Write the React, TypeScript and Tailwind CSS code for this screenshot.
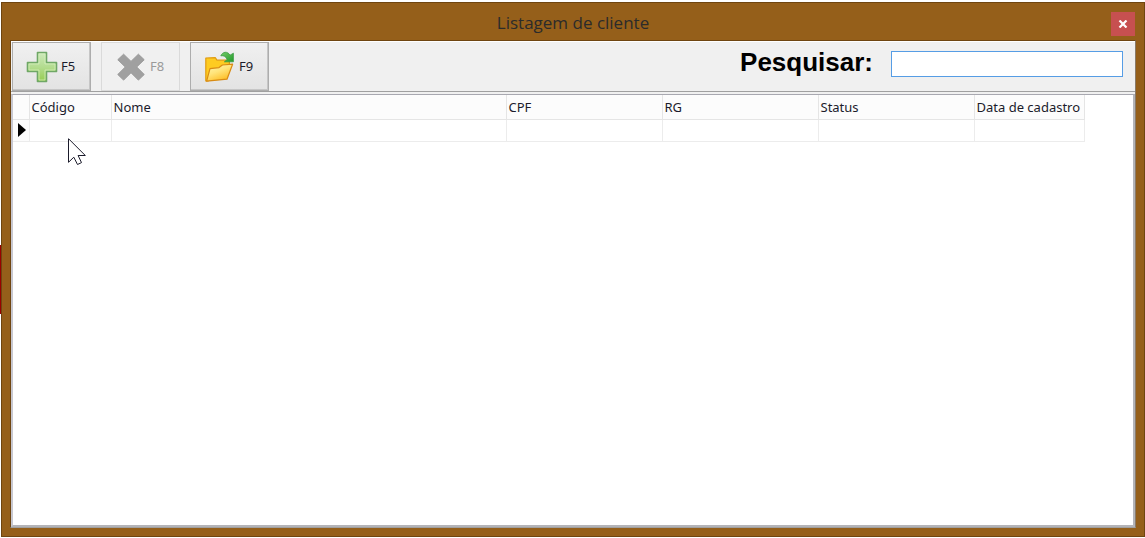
import type { ReactNode } from "react";

const columns = [
  { label: "Código", width: "w-[82px]" },
  { label: "Nome", width: "w-[395px]" },
  { label: "CPF", width: "w-[156px]" },
  { label: "RG", width: "w-[156px]" },
  { label: "Status", width: "w-[156px]" },
  { label: "Data de cadastro", width: "w-[110px]" },
];

function PlusIcon() {
  return (
    <svg width="32" height="32" viewBox="0 0 32 32" aria-hidden="true">
      <defs>
        <linearGradient id="plus-fill" x1="0" y1="0" x2="0" y2="1">
          <stop offset="0" stopColor="#cde9bb" />
          <stop offset="0.5" stopColor="#b3dc8f" />
          <stop offset="1" stopColor="#96cc50" />
        </linearGradient>
      </defs>
      <path
        d="M11.5 1.5h9v10h10v9h-10v10h-9v-10h-10v-9h10z"
        fill="url(#plus-fill)"
        stroke="#6fa766"
        strokeWidth="1.6"
        strokeLinejoin="round"
      />
      <path
        d="M13 3h6v10h10v6H19v10h-6V19H3v-6h10z"
        fill="none"
        stroke="#d5efbf"
        strokeOpacity="0.7"
      />
    </svg>
  );
}

function DeleteIcon() {
  return (
    <svg width="32" height="32" viewBox="0 0 32 32" aria-hidden="true">
      <path
        d="M8.6 3.2 16 10.4l7.4-7.2 5.8 5.5-7.5 7.3 7.5 7.5-5.8 5.6-7.4-7.4-7.4 7.4-5.8-5.6 7.5-7.5-7.5-7.3z"
        fill="#a0a0a0"
        stroke="#999999"
        strokeLinejoin="round"
      />
    </svg>
  );
}

function FolderIcon() {
  return (
    <svg width="32" height="32" viewBox="0 0 32 32" aria-hidden="true">
      <defs>
        <linearGradient id="folder-front" x1="0" y1="0" x2="0.6" y2="1">
          <stop offset="0" stopColor="#fff7b5" />
          <stop offset="0.5" stopColor="#ffe47a" />
          <stop offset="1" stopColor="#fdbc22" />
        </linearGradient>
        <linearGradient id="folder-arrow" x1="0" y1="0" x2="1" y2="1">
          <stop offset="0" stopColor="#74cc68" />
          <stop offset="1" stopColor="#229a2b" />
        </linearGradient>
      </defs>
      <path
        d="M1.8 30V7l9.4-.4 1.8 2.6h12.4v5L4 30z"
        fill="#fecb21"
        stroke="#e09c12"
        strokeWidth="1.2"
        strokeLinejoin="round"
      />
      <path
        d="M2.6 30.2 6 17.6l9-1 3.4-2.6 10.2-.8-5.6 15z"
        fill="url(#folder-front)"
        stroke="#d88b14"
        strokeWidth="1.2"
        strokeLinejoin="round"
      />
      <path
        d="M16.8 4.8C18.6.6 23.6-.2 26 4.2l3.4-2v8.6h-9l2.8-2.3c-1.2-3-3.4-4.2-6.4-3.7z"
        fill="url(#folder-arrow)"
        stroke="#3a9a42"
        strokeWidth="0.8"
        strokeLinejoin="round"
      />
    </svg>
  );
}

function ToolButton({
  label,
  icon,
  disabled = false,
}: {
  label: string;
  icon: ReactNode;
  disabled?: boolean;
}) {
  return (
    <button
      type="button"
      disabled={disabled}
      className="flex h-[49px] w-[79px] items-center gap-[3px] border border-[#adadad] bg-linear-to-b from-[#f0f0f0] to-[#e3e3e3] pl-[13px] text-[13px] text-[#1b1b2b] shadow-[inset_-1px_-1px_0_#c6c6c6] disabled:border-[#dadada] disabled:bg-none disabled:text-[#9a9a9a] disabled:shadow-none"
    >
      {icon}
      <span>{label}</span>
    </button>
  );
}

export default function App() {
  return (
    <div className="relative flex min-h-screen bg-white pt-[2px] pb-px pl-px font-['Noto_Sans',sans-serif]">
      <div className="absolute top-[245px] left-0 h-[69px] w-px bg-[#990000]" />
      <section className="flex flex-1 flex-col border border-[#6f4510] bg-[#955f1a] px-2 pb-2">
        <header className="grid h-[37px] shrink-0 grid-cols-[1fr_auto_1fr] items-center">
          <h1 className="col-start-2 pt-[2px] font-['Open_Sans',sans-serif] text-[17px] leading-6 text-[#2b2b2b]">
            Listagem de cliente
          </h1>
          <button
            type="button"
            aria-label="Fechar"
            className="mt-1 mr-px flex size-6 items-center justify-center justify-self-end bg-[#c75050]"
          >
            <svg width="10" height="8" viewBox="0 0 10 8" aria-hidden="true">
              <path d="M1.5.5l7 7M8.5.5l-7 7" stroke="#fff" strokeWidth="2.2" />
            </svg>
          </button>
        </header>

        <main className="flex flex-1 flex-col border border-t-[#6f4510] border-r-[#8a7a68] border-b-[#a0a0a0] border-l-[#6f4510] bg-[#f0f0f0]">
          <div className="flex items-start justify-between border-t border-b border-t-white border-b-[#a0a0a0] pr-3 pl-px">
            <div className="flex gap-[10px]">
              <ToolButton label="F5" icon={<PlusIcon />} />
              <ToolButton label="F8" icon={<DeleteIcon />} disabled />
              <ToolButton label="F9" icon={<FolderIcon />} />
            </div>
            <div className="flex items-start gap-[18px] pt-[6px]">
              <label
                htmlFor="search"
                className="font-['Liberation_Sans',Arial,sans-serif] text-[26px] leading-7 font-bold text-black"
              >
                Pesquisar:
              </label>
              <input
                id="search"
                type="text"
                className="mt-[3px] h-[26px] w-[232px] border border-[#569de5] bg-white px-1 text-[13px] outline-none"
              />
            </div>
          </div>

          <div className="relative mt-[2px] flex-1 border border-t-[#a8a8b0] border-r-2 border-r-[#b4b4b8] border-b-2 border-b-[#b4b4b8] border-l-2 border-l-[#c8c8d0] bg-white">
            <table className="table-fixed border-collapse text-[13px] leading-5 text-[#1b1b2b]">
              <thead>
                <tr className="h-6 bg-[#fcfcfc]">
                  <th className="w-4 border-r border-b border-[#e5e5e5] p-0" />
                  {columns.map((column) => (
                    <th
                      key={column.label}
                      scope="col"
                      className={`${column.width} border-r border-b border-[#e5e5e5] p-0 pl-[2px] text-left font-normal whitespace-nowrap`}
                    >
                      {column.label}
                    </th>
                  ))}
                </tr>
              </thead>
              <tbody>
                <tr className="h-[22px]">
                  <td className="border-r border-b border-[#ececec] bg-[#fcfcfc] p-0">
                    <svg
                      width="8"
                      height="14"
                      viewBox="0 0 8 14"
                      className="ml-[5px]"
                      role="img"
                      aria-label="Registro atual"
                    >
                      <path d="M0 0l8 7-8 7z" fill="#000" />
                    </svg>
                  </td>
                  {columns.map((column) => (
                    <td
                      key={column.label}
                      className="border-r border-b border-[#ececec] p-0"
                    />
                  ))}
                </tr>
              </tbody>
            </table>
            <svg
              width="19"
              height="28"
              viewBox="0 0 19 28"
              className="pointer-events-none absolute top-[43px] left-[55px]"
              aria-hidden="true"
            >
              <path
                d="M.5.7v23.6l5.3-5.1 3.7 7.3 4-1.9-3.4-7.1h7.2z"
                fill="#fff"
                stroke="#1b1b2b"
              />
            </svg>
          </div>
        </main>
      </section>
    </div>
  );
}
